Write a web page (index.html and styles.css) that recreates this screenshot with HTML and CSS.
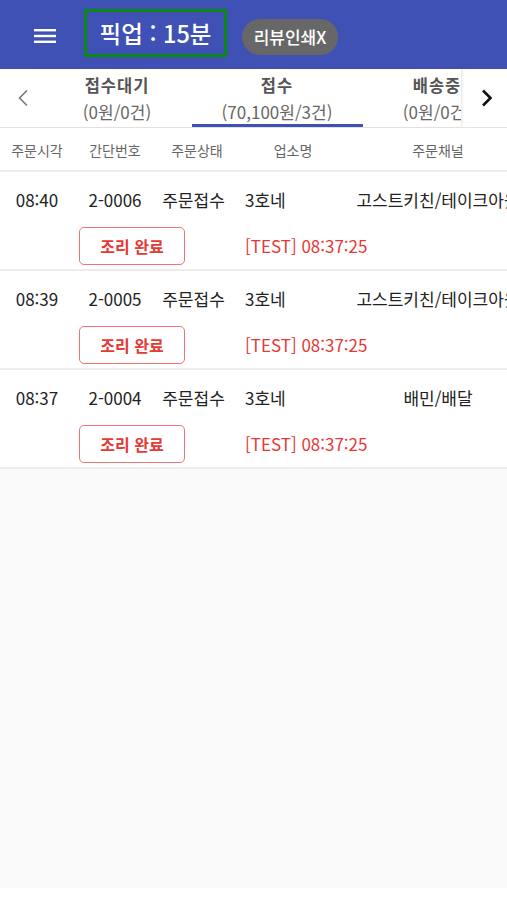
FILE: index.html
```html
<!DOCTYPE html>
<html lang="ko">
<head>
<meta charset="utf-8">
<link rel="stylesheet" href="styles.css">
</head>
<body>
<div class="app">
  <header class="topbar">
    <svg class="menu" width="22" height="16" viewBox="0 0 22 16"><rect x="0" y="1" width="22" height="2.4" fill="#fff"/><rect x="0" y="6.8" width="22" height="2.4" fill="#fff"/><rect x="0" y="12.6" width="22" height="2.4" fill="#fff"/></svg>
    <div class="pickup">픽업 : 15분</div>
    <div class="pill">리뷰인쇄X</div>
  </header>

  <nav class="tabbar">
    <div class="arrow left"><svg width="12" height="18" viewBox="0 0 12 18"><path d="M10 1.5 L2.5 9 L10 16.5" fill="none" stroke="#777" stroke-width="1.6"/></svg></div>
    <div class="tabs">
      <div class="tab"><div class="label">접수대기</div><div class="sub">(0원/0건)</div></div>
      <div class="tab active"><div class="label">접수</div><div class="sub">(70,100원/3건)</div></div>
      <div class="tab"><div class="label">배송중</div><div class="sub">(0원/0건)</div></div>
    </div>
    <div class="arrow right"><svg width="12" height="18" viewBox="0 0 12 18"><path d="M2 1.5 L9.5 9 L2 16.5" fill="none" stroke="#111" stroke-width="2.6"/></svg></div>
  </nav>

  <div class="thead">
    <div class="c1">주문시각</div>
    <div class="c2">간단번호</div>
    <div class="c3">주문상태</div>
    <div class="c4">업소명</div>
    <div class="c5">주문채널</div>
  </div>

  <div class="row">
    <div class="c1">08:40</div>
    <div class="c2">2-0006</div>
    <div class="c3 st">주문접수</div>
    <div class="c4 nm">3호네</div>
    <div class="c5 ch">고스트키친/테이크아웃</div>
    <button class="done">조리 완료</button>
    <div class="test">[TEST] 08:37:25</div>
  </div>
  <div class="row">
    <div class="c1">08:39</div>
    <div class="c2">2-0005</div>
    <div class="c3 st">주문접수</div>
    <div class="c4 nm">3호네</div>
    <div class="c5 ch">고스트키친/테이크아웃</div>
    <button class="done">조리 완료</button>
    <div class="test">[TEST] 08:37:25</div>
  </div>
  <div class="row">
    <div class="c1">08:37</div>
    <div class="c2">2-0004</div>
    <div class="c3 st">주문접수</div>
    <div class="c4 nm">3호네</div>
    <div class="c5 ch">배민/배달</div>
    <button class="done">조리 완료</button>
    <div class="test">[TEST] 08:37:25</div>
  </div>
</div>
</body>
</html>
```

FILE: styles.css
```css
* { box-sizing: border-box; }
html, body { margin: 0; padding: 0; background: #fff; }
body {
  width: 507px;
  height: 900px;
  overflow: hidden;
  font-family: "Noto Sans CJK KR", "Noto Sans", sans-serif;
}
.app {
  height: 888px;
  background: #fafafa;
  overflow: hidden;
}
.topbar {
  height: 69px;
  background: #3f51b5;
  display: flex;
  align-items: flex-start;
}
.menu {
  margin: 28px 0 0 34px;
  flex: none;
}
.pickup {
  margin: 9px 0 0 28px;
  width: 143px;
  height: 48px;
  border: 3px solid #0a8a14;
  color: #fff;
  font-size: 23.5px;
  font-weight: 500;
  line-height: 42px;
  text-align: center;
  white-space: nowrap;
}
.pill {
  margin: 19px 0 0 15px;
  width: 96px;
  height: 36px;
  border-radius: 18px;
  background: #676767;
  color: #fff;
  font-size: 17px;
  font-weight: 500;
  line-height: 36px;
  text-align: center;
  white-space: nowrap;
}
.tabbar {
  height: 59px;
  background: #fff;
  border-bottom: 1px solid #e6e6e6;
  display: flex;
}
.arrow {
  display: flex;
  align-items: center;
  justify-content: center;
}
.arrow.left { width: 37px; padding-left: 8px; }
.arrow.right { width: 45px; padding-left: 4px; }
.tabs {
  width: 425px;
  display: flex;
  overflow: hidden;
  border-right: 1px solid #ececec;
  box-shadow: 1px 0 3px rgba(0,0,0,0.06);
}
.tab {
  flex: none;
  width: 160px;
  position: relative;
  text-align: center;
  padding-top: 5px;
  white-space: nowrap;
}
.tab .label {
  font-size: 16.5px;
  font-weight: 700;
  color: #555;
  line-height: 23px;
  letter-spacing: 1px;
}
.tab .sub {
  font-size: 17px;
  color: #666;
  line-height: 23px;
  margin-top: 3px;
}
.tab.active::after {
  content: "";
  position: absolute;
  left: -5px;
  right: -6px;
  bottom: 0;
  height: 3px;
  background: #3f51b5;
}
.thead, .row {
  display: grid;
  grid-template-columns: 74px 82px 82px 110px 180px;
  width: 528px;
  background: #fff;
}
.thead {
  padding: 12px 0 10px;
  border-bottom: 2px solid #ececec;
  font-size: 14px;
  line-height: 20px;
  color: #666;
  text-align: center;
  white-space: nowrap;
}
.row {
  padding: 16px 0 4px;
  border-bottom: 2px solid #ececec;
  font-size: 17px;
  line-height: 24px;
  color: #222;
  text-align: center;
  white-space: nowrap;
}
.row .st { padding-right: 7px; }
.row .nm { text-align: left; padding-left: 7px; }
.done {
  grid-column: 2 / 4;
  justify-self: start;
  margin: 15px 0 0 5px;
  width: 106px;
  height: 38px;
  border: 1.5px solid #ec7670;
  border-radius: 5px;
  background: #fff;
  color: #e53935;
  font-family: inherit;
  font-size: 16px;
  font-weight: 700;
  padding: 0;
}
.test {
  grid-column: 4 / 6;
  align-self: center;
  margin-top: 15px;
  padding-left: 7px;
  text-align: left;
  color: #e53935;
  font-size: 17px;
}
```
